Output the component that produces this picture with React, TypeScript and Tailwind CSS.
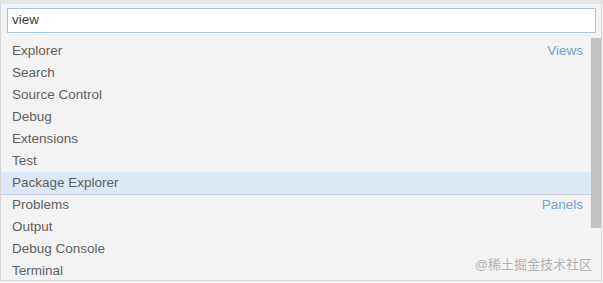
import React from 'react'

type Item = { label: string; group?: string; active?: boolean; separator?: boolean }

const items: Item[] = [
  { label: 'Explorer', group: 'Views' },
  { label: 'Search' },
  { label: 'Source Control' },
  { label: 'Debug' },
  { label: 'Extensions' },
  { label: 'Test' },
  { label: 'Package Explorer', active: true },
  { label: 'Problems', group: 'Panels', separator: true },
  { label: 'Output' },
  { label: 'Debug Console' },
  { label: 'Terminal' },
]

const App: React.FC = () => {
  return (
    <div
      className="relative w-[603px] h-[283px] overflow-hidden bg-[#f5f5f5] pt-[4px]"
      style={{ fontFamily: '"Liberation Sans", Arial, sans-serif' }}
    >
      <div className="absolute left-0 top-0 w-full h-[4px] bg-[#e4e4e4]" />

      {/* quick open widget */}
      <div className="relative w-[602px] h-[277px] bg-[#f3f3f3] border-l border-r border-b border-[#d6d6d6] overflow-hidden">
        <div className="pl-[6px] pr-[5px] pt-[4px]">
          <div className="h-[25px] bg-white border border-[#a5c7e3] flex items-center pl-[4px] text-[13.5px] text-[#3b3b3b]">
            view
          </div>
        </div>

        <ul className="mt-[7px]">
          {items.map((item) => (
            <li
              key={item.label}
              className={
                'box-border h-[22px] flex items-center justify-between pl-[11px] pr-[18px] text-[13.5px] text-[#5f5f5f] ' +
                (item.active ? 'bg-[#dce8f8] ' : '') +
                (item.separator ? 'border-t border-[#cccedb]' : '')
              }
            >
              <span>{item.label}</span>
              {item.group && <span className="text-[#72a2d2]">{item.group}</span>}
            </li>
          ))}
        </ul>

        {/* scrollbar thumb */}
        <div className="absolute top-[34px] right-0 w-[10px] h-[190px] bg-[#bdbdbd]/90" />
      </div>

      {/* watermark */}
      <div
        className="absolute right-[11px] top-[257px] text-[13px] leading-[16px] text-[#b3b3b3]"
        style={{ fontFamily: '"Liberation Sans", "Noto Sans CJK SC", sans-serif' }}
      >
        @稀土掘金技术社区
      </div>
    </div>
  )
}

export default App
